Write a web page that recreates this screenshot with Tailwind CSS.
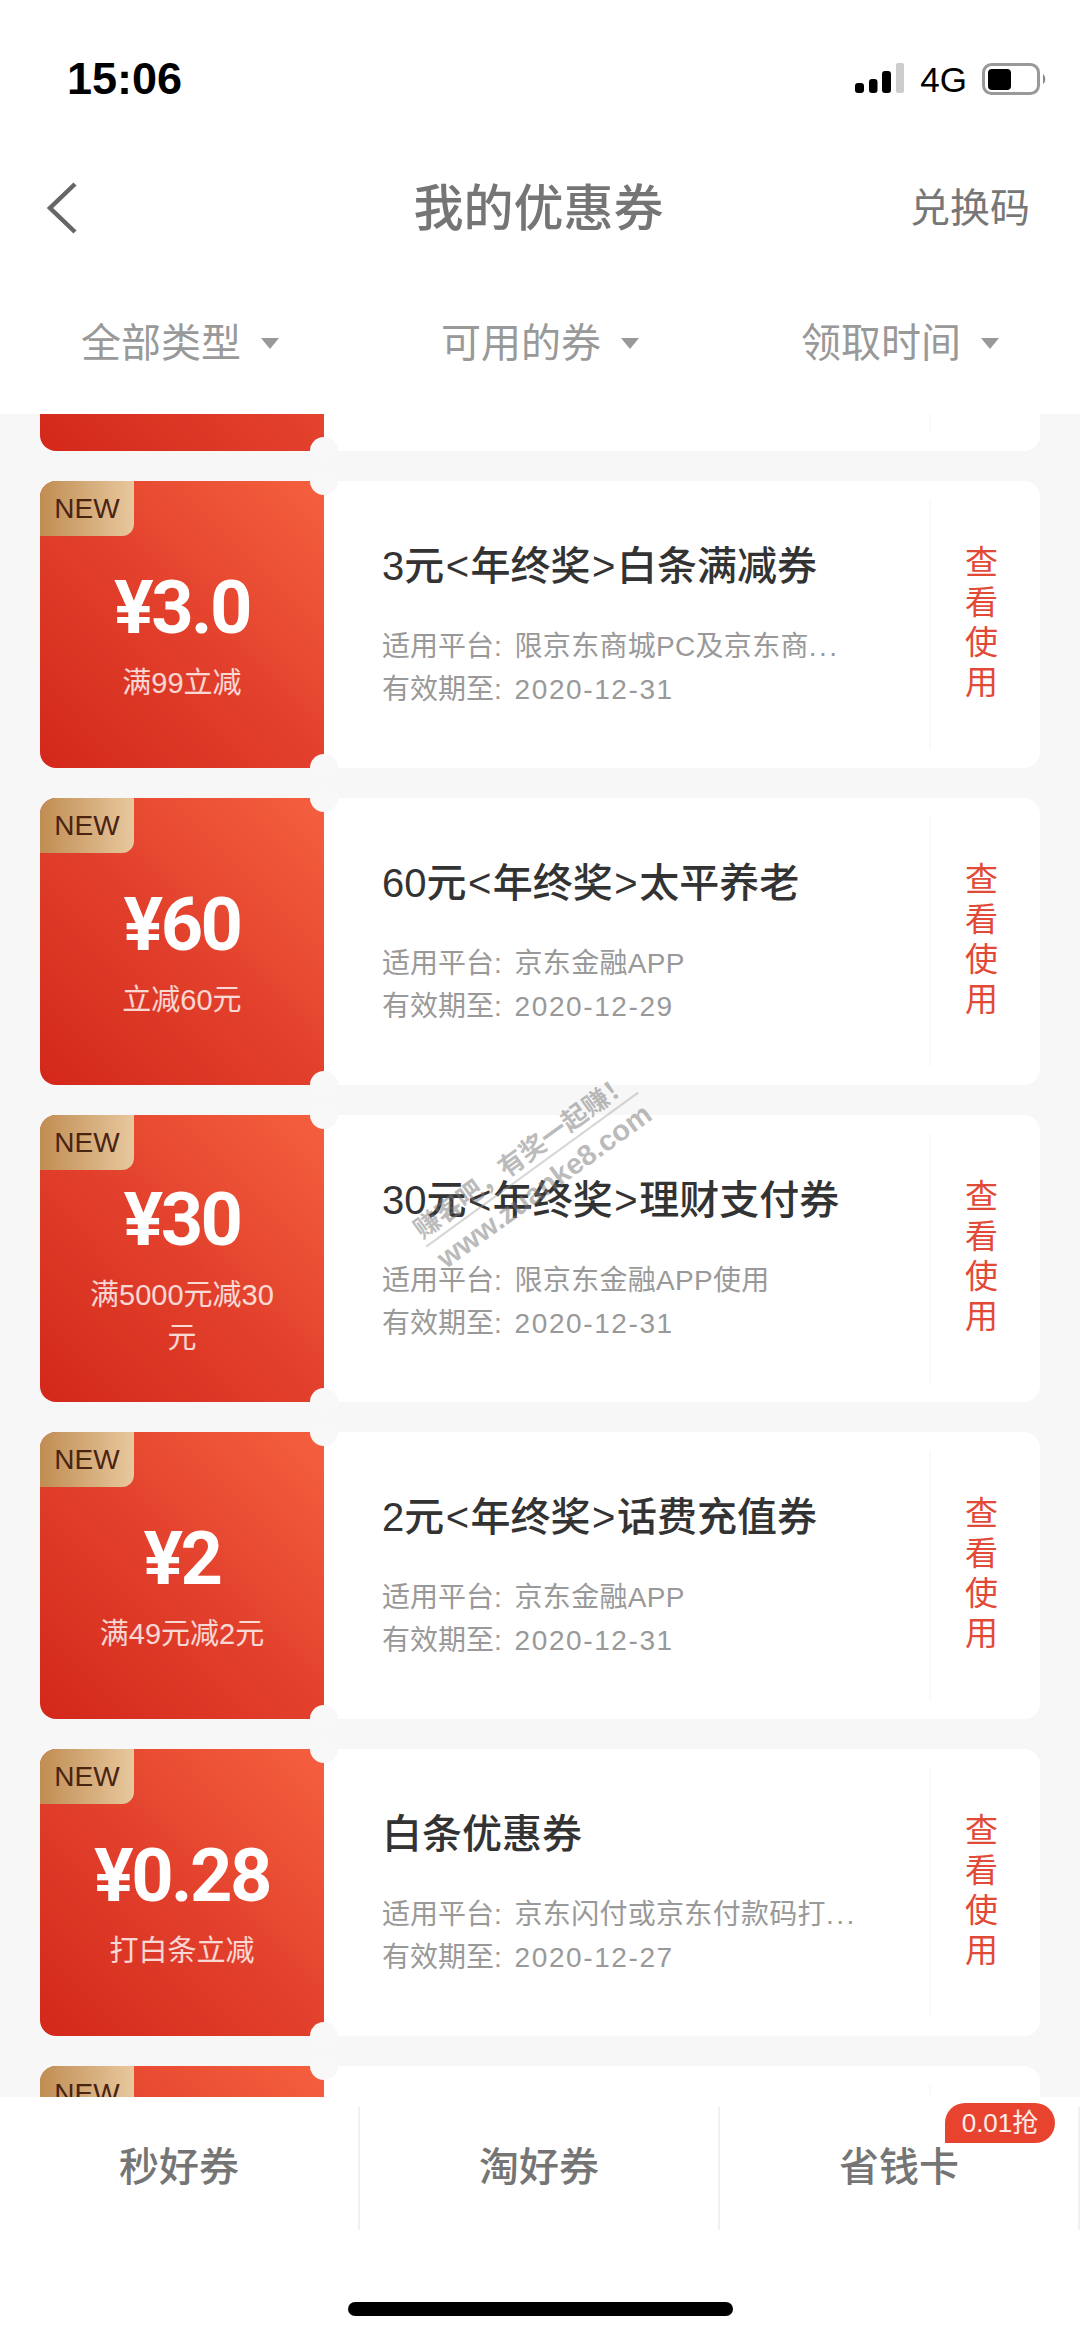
<!DOCTYPE html>
<html lang="zh-CN">
<head>
    <meta charset="UTF-8">
    <meta name="viewport" content="width=device-width, initial-scale=1.0">
    <title>我的优惠券</title>
    <script src="https://cdn.jsdelivr.net/npm/@tailwindcss/browser@4"></script>
</head>
<body class="bg-[#f7f7f7] font-['Liberation_Sans','Noto_Sans_CJK_SC',sans-serif]">
    <div class="relative w-[1080px] h-[2339px] overflow-hidden flex flex-col">
        <!-- 顶部 -->
        <header class="bg-white h-[414px] shrink-0 z-10">
            <div class="h-[158px] flex items-center justify-between pl-[67px] pr-[33px]">
                <span class="text-[45px] font-bold text-black">15:06</span>
                <div class="flex items-center">
                    <svg width="50" height="32" viewBox="0 0 50 32">
                        <rect x="0" y="20" width="9" height="10" rx="3" fill="#000"/>
                        <rect x="14" y="16" width="8.5" height="14" rx="3" fill="#000"/>
                        <rect x="27" y="8" width="9" height="22" rx="3" fill="#000"/>
                        <rect x="41" y="0" width="8" height="30" rx="2" fill="#ccc"/>
                    </svg>
                    <span class="ml-[15px] text-[35px] leading-none text-black">4G</span>
                    <svg class="ml-[15px]" width="65" height="32" viewBox="0 0 65 32">
                        <rect x="1.5" y="1.5" width="55" height="29" rx="8" fill="#fff" stroke="#999" stroke-width="3"/>
                        <rect x="6" y="6" width="23" height="21" rx="4" fill="#000"/>
                        <path d="M61 11 C64 13 64 19 61 21 Z" fill="#888"/>
                    </svg>
                </div>
            </div>
            <div class="h-[100px] grid grid-cols-[1fr_auto_1fr] items-center pl-[47px] pr-[50px]">
                <svg width="30" height="52" viewBox="0 0 30 52" fill="none">
                    <path d="M28 2 L3 26 L28 50" stroke="#666" stroke-width="4.5"/>
                </svg>
                <h1 class="pt-[2px] text-[50px] leading-none font-medium text-[#757575]">我的优惠券</h1>
                <span class="justify-self-end text-[40px] leading-none text-[#777]">兑换码</span>
            </div>
            <div class="mt-[14px] h-[142px] grid grid-cols-3">
                <div class="flex items-center justify-center gap-[20px]">
                    <span class="text-[40px] leading-none text-[#999]">全部类型</span>
                    <span class="w-0 h-0 border-x-[9px] border-x-transparent border-t-[11px] border-t-[#999]"></span>
                </div>
                <div class="flex items-center justify-center gap-[20px]">
                    <span class="text-[40px] leading-none text-[#999]">可用的券</span>
                    <span class="w-0 h-0 border-x-[9px] border-x-transparent border-t-[11px] border-t-[#999]"></span>
                </div>
                <div class="flex items-center justify-center gap-[20px]">
                    <span class="text-[40px] leading-none text-[#999]">领取时间</span>
                    <span class="w-0 h-0 border-x-[9px] border-x-transparent border-t-[11px] border-t-[#999]"></span>
                </div>
            </div>
        </header>

        <!-- 优惠券列表 -->
        <main class="flex-1 overflow-hidden">
            <div id="list" class="mt-[-250px] flex flex-col gap-[30px] px-[40px]"></div>
        </main>

        <!-- 底部 -->
        <footer class="relative bg-white h-[242px] shrink-0">
            <div class="pt-[10px] grid grid-cols-3">
                <div class="h-[123px] pb-[3px] flex items-center justify-center border-r-2 border-r-[#f0f0f0] text-[40px] font-medium text-[#757575]">秒好券</div>
                <div class="h-[123px] pb-[3px] flex items-center justify-center border-r-2 border-r-[#f0f0f0] text-[40px] font-medium text-[#757575]">淘好券</div>
                <div class="h-[123px] pb-[3px] flex items-center justify-center border-r-2 border-r-[#f0f0f0] text-[40px] font-medium text-[#757575]">省钱卡</div>
            </div>
            <span class="absolute left-[945px] top-[6px] w-[110px] h-[40px] flex items-center justify-center rounded-full rounded-bl-none bg-[#e8432f] text-[26px] text-white/90">0.01抢</span>
            <div class="absolute left-[348px] top-[205px] w-[385px] h-[14px] rounded-[7px] bg-black"></div>
        </footer>

        <!-- 水印 -->
        <div class="absolute left-[403px] top-[1136px] w-[262px] -rotate-[36deg] text-center text-[#777]/50 pointer-events-none z-20">
            <div class="text-[26px] leading-[32px] font-bold border-b-2 border-b-[#999]/40 whitespace-nowrap">赚客吧，有奖一起赚！</div>
            <div class="text-[29px] leading-[38px] font-bold whitespace-nowrap">www.zuanke8.com</div>
        </div>
    </div>

    <script>
        const lt = '<span class="px-[1.5px]">&lt;</span>';
        const gt = '<span class="px-[1.5px]">&gt;</span>';
        const dots = '<span class="tracking-[2.5px]">...</span>';
        const coupons = [
            { price: '', sub: '', title: '', scope: '', date: '' },
            { price: '¥3.0', sub: '满99立减', title: `3元${lt}年终奖${gt}白条满减券`, scope: `限京东商城PC及京东商${dots}`, date: '2020-12-31' },
            { price: '¥60', sub: '立减60元', title: `60元${lt}年终奖${gt}太平养老`, scope: '京东金融APP', date: '2020-12-29' },
            { price: '¥30', sub: '满5000元减30元', title: `30元${lt}年终奖${gt}理财支付券`, scope: '限京东金融APP使用', date: '2020-12-31' },
            { price: '¥2', sub: '满49元减2元', title: `2元${lt}年终奖${gt}话费充值券`, scope: '京东金融APP', date: '2020-12-31' },
            { price: '¥0.28', sub: '打白条立减', title: '白条优惠券', scope: `京东闪付或京东付款码打${dots}`, date: '2020-12-27' },
            { price: '', sub: '', title: '', scope: '', date: '', tag: true }
        ];

        // 券列表
        document.getElementById('list').innerHTML = coupons.map(c => `
            <div class="relative shrink-0 h-[287px] flex rounded-[16px] bg-white">
                <div class="relative w-[284px] shrink-0 flex flex-col items-center justify-center pt-[8px] px-[40px] rounded-l-[16px] bg-linear-to-tr from-[#d3271a] via-[#e2402c] to-[#f5603f] text-white">
                    ${c.price || c.tag ? '<span class="absolute left-0 top-0 w-[94px] h-[55px] flex items-center justify-center rounded-tl-[16px] rounded-br-[12px] bg-linear-to-r from-[#c08d52] to-[#e8c89e] text-[28px] text-[#4a2412]">NEW</span>' : ''}
                    <div class="text-[74px] leading-[109px] font-bold font-['Roboto'] tracking-[-2.5px]">${c.price}</div>
                    <div class="text-[29px] leading-[43px] text-white/80 text-center">${c.sub}</div>
                </div>
                <div class="flex-1 min-w-0 pl-[58px] pt-[63px]">
                    <div class="text-[40px] leading-[44px] font-medium text-[#333] whitespace-nowrap">${c.title}</div>
                    <div class="mt-[37px] text-[28px] leading-[43px] text-[#999] whitespace-nowrap">${c.scope ? '<span class="mr-[5px]">适用平台:</span> <span class="tracking-[0.3px]">' + c.scope + '</span>' : ''}</div>
                    <div class="text-[28px] leading-[43px] text-[#999] whitespace-nowrap">${c.date ? '<span class="mr-[5px]">有效期至:</span> <span class="tracking-[1.6px]">' + c.date + '</span>' : ''}</div>
                </div>
                <div class="w-[111px] shrink-0 my-[19px] pr-[8px] pb-[3px] border-l-2 border-l-[#f9f9f9] flex flex-col items-center justify-center text-[33px] leading-[40px] text-[#e24a38]">
                    ${c.title ? '<span>查</span><span>看</span><span>使</span><span>用</span>' : ''}
                </div>
                <span class="absolute left-[270px] top-[-14px] w-[28px] h-[28px] rounded-full bg-[#f8f8f8]"></span>
                <span class="absolute left-[270px] bottom-[-14px] w-[28px] h-[28px] rounded-full bg-[#f8f8f8]"></span>
            </div>
        `).join('');
    </script>
</body>
</html>
